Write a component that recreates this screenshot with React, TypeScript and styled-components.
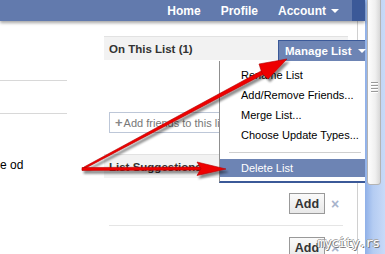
import React from 'react';
import styled, { createGlobalStyle } from 'styled-components';

const GlobalStyle = createGlobalStyle`
  html, body {
    margin: 0;
    padding: 0;
    overflow: hidden;
    background: #fff;
  }
  body {
    font-family: 'Liberation Sans', Arial, sans-serif;
  }
`;

const menuItems = ['Rename List', 'Add/Remove Friends...', 'Merge List...', 'Choose Update Types...'];

export default function App() {
  return (
    <>
      <GlobalStyle />
      <Page>
        <Main>
          <TopBar>
            <Nav>
              <NavLink>Home</NavLink>
              <NavLink>Profile</NavLink>
              <NavLink>
                Account <Caret />
              </NavLink>
            </Nav>
            <DarkEdge />
          </TopBar>
          <Body>
            <LeftCol>
              <Rule $top={60} />
              <Rule $top={33} />
              <Snippet>e od</Snippet>
            </LeftCol>
            <CenterCol>
              <SectionHead>On This List (1)</SectionHead>
              <FriendArea />
              <AddInput>
                <Plus>+</Plus>Add friends to this list
              </AddInput>
              <SectionHead $spaced>List Suggestions</SectionHead>
              <SuggestList>
                <SuggestRow>
                  <AddBtn>Add</AddBtn>
                  <Dismiss>×</Dismiss>
                </SuggestRow>
                <SuggestRow>
                  <AddBtn>Add</AddBtn>
                  <Dismiss>×</Dismiss>
                </SuggestRow>
              </SuggestList>
            </CenterCol>
            <RightRail />
            <MenuWrap>
              <ManageBtn>
                Manage List <Caret />
              </ManageBtn>
              <Dropdown>
                {menuItems.map((item) => (
                  <MenuItem key={item}>{item}</MenuItem>
                ))}
                <Separator />
                <MenuItem $active>Delete List</MenuItem>
              </Dropdown>
            </MenuWrap>
          </Body>
        </Main>
        <Scrollbar>
          <Thumb>
            <Grip />
            <Grip />
            <Grip />
            <Grip />
          </Thumb>
        </Scrollbar>
        <Arrows viewBox="0 0 385 254" width="385" height="254">
          <defs>
            <filter id="shadow" x="-10%" y="-10%" width="120%" height="130%">
              <feDropShadow dx="2" dy="3" stdDeviation="1.2" floodColor="#000" floodOpacity="0.45" />
            </filter>
          </defs>
          <g filter="url(#shadow)" fill="#ee0000" stroke="#b00000" strokeWidth="0.6">
            <path d="M82 170 L84 167 L262 70.5 L264 74 Z" />
            <polygon points="287,59 268,79 262,73 259,64" />
            <path d="M82 167.5 L201 167 L201 170 L82 170.5 Z" />
            <polygon points="226,169 197,162 201,168.5 197,175.5" />
          </g>
        </Arrows>
        <Watermark>mycity.rs</Watermark>
      </Page>
    </>
  );
}

const Page = styled.div`
  position: relative;
  display: flex;
  width: 385px;
  height: 254px;
  overflow: hidden;
`;

const Main = styled.div`
  display: flex;
  flex-direction: column;
  width: 365px;
  min-height: 0;
`;

const TopBar = styled.div`
  display: flex;
  flex-shrink: 0;
  height: 21px;
  position: relative;
  z-index: 1;
  box-shadow: 0 2px 3px rgba(0, 0, 0, 0.35);
`;

const Nav = styled.div`
  flex: 1;
  display: flex;
  justify-content: flex-end;
  align-items: center;
  gap: 20px;
  padding-right: 13px;
  background: #627aad;
`;

const NavLink = styled.span`
  display: flex;
  align-items: center;
  gap: 5px;
  color: #fff;
  font-weight: bold;
  font-size: 12px;
  line-height: 1;
`;

const Caret = styled.span`
  display: inline-block;
  width: 0;
  height: 0;
  border-left: 4px solid transparent;
  border-right: 4px solid transparent;
  border-top: 4px solid #fff;
`;

const DarkEdge = styled.div`
  width: 13px;
  background: #3b5998;
`;

const Body = styled.div`
  position: relative;
  flex: 1;
  min-height: 0;
  display: flex;
`;

const LeftCol = styled.div`
  width: 67px;
  display: flex;
  flex-direction: column;
`;

const Rule = styled.div<{ $top: number }>`
  margin-top: ${(p) => p.$top - 1}px;
  border-top: 1px solid #d8d8d8;
`;

const Snippet = styled.div`
  margin-top: 44px;
  font-size: 12px;
  color: #000;
`;

const CenterCol = styled.div`
  margin-left: 37px;
  width: 244px;
  padding-top: 15px;
  display: flex;
  flex-direction: column;
`;

const SectionHead = styled.div<{ $spaced?: boolean }>`
  flex-shrink: 0;
  height: 23px;
  margin-top: ${(p) => (p.$spaced ? 21 : 0)}px;
  border-top: 1px solid #e2e2e2;
  background: #f2f2f2;
  padding-left: 5px;
  display: flex;
  align-items: center;
  font-size: 11.5px;
  font-weight: bold;
  color: #333;
`;

const FriendArea = styled.div`
  flex-shrink: 0;
  height: 52px;
`;

const AddInput = styled.div`
  flex-shrink: 0;
  height: 19px;
  margin-left: 5px;
  width: 200px;
  border: 1px solid #bdc7d8;
  display: flex;
  align-items: center;
  padding-left: 5px;
  font-size: 11px;
  color: #777;
  white-space: nowrap;
  overflow: hidden;
`;

const Plus = styled.span`
  font-weight: bold;
  font-size: 13px;
  margin-right: 1px;
  color: #888;
`;

const SuggestList = styled.div`
  flex-shrink: 0;
  padding-top: 4px;
  display: flex;
  flex-direction: column;
`;

const SuggestRow = styled.div`
  display: flex;
  justify-content: flex-end;
  align-items: center;
  gap: 6px;
  margin: 0 5px;
  padding: 11px 2px 11px 0;
  border-bottom: 1px solid #e5e5e5;
`;

const AddBtn = styled.div`
  width: 34px;
  height: 19px;
  border: 1px solid #999;
  background: linear-gradient(#fafafa, #e8e8e8);
  display: flex;
  align-items: center;
  justify-content: center;
  font-size: 12.5px;
  font-weight: bold;
  color: #333;
`;

const Dismiss = styled.span`
  font-size: 14px;
  font-weight: bold;
  color: #a8b4cc;
  width: 10px;
`;

const RightRail = styled.div`
  margin-left: 9px;
  width: 7px;
  border-left: 1px solid #d0d0d0;
`;

const MenuWrap = styled.div`
  position: absolute;
  left: 278px;
  top: 19px;
  z-index: 2;
`;

const ManageBtn = styled.div`
  box-sizing: border-box;
  width: 87px;
  height: 21px;
  padding-left: 6px;
  background: #6d84b4;
  border-left: 1px solid #3b5998;
  border-top: 1px solid #3b5998;
  display: flex;
  align-items: center;
  gap: 7px;
  color: #fff;
  font-size: 11.5px;
  font-weight: bold;
  white-space: nowrap;
`;

const Dropdown = styled.div`
  position: absolute;
  left: -59px;
  top: 21px;
  width: 145px;
  background: #fff;
  border-left: 1px solid #8f8f8f;
  border-bottom: 2px solid #3b5998;
  padding: 4px 0 4px;
  display: flex;
  flex-direction: column;
`;

const MenuItem = styled.div<{ $active?: boolean }>`
  height: ${(p) => (p.$active ? 18 : 20)}px;
  padding-left: 21px;
  display: flex;
  align-items: center;
  font-size: 11px;
  color: ${(p) => (p.$active ? '#fff' : '#000')};
  background: ${(p) => (p.$active ? '#6d84b4' : 'transparent')};
  white-space: nowrap;
`;

const Separator = styled.div`
  margin: 7px 4px 6px 9px;
  border-top: 1px solid #cfcfcf;
`;

const Scrollbar = styled.div`
  width: 20px;
  background: linear-gradient(90deg, #8fb0e8, #b4ccf2 40%, #c8daf8);
  display: flex;
  flex-direction: column;
  align-items: flex-start;
  padding-left: 2px;
`;

const Thumb = styled.div`
  box-sizing: border-box;
  width: 14px;
  height: 190px;
  margin-top: -5px;
  border: 1px solid #b4b4b4;
  border-radius: 3px;
  background: linear-gradient(90deg, #fdfdfd, #f0f0f0 60%, #d8d8d8);
  display: flex;
  flex-direction: column;
  align-items: center;
  justify-content: center;
  gap: 1px;
`;

const Grip = styled.div`
  width: 7px;
  height: 1px;
  background: #9a9a9a;
  border-bottom: 1px solid #fff;
  position: relative;
  top: -3px;
`;

const Arrows = styled.svg`
  position: absolute;
  left: 0;
  top: 0;
  pointer-events: none;
  z-index: 5;
`;

const Watermark = styled.div`
  position: absolute;
  right: 6px;
  bottom: 4px;
  z-index: 6;
  font-family: 'DejaVu Sans Mono', monospace;
  font-size: 13px;
  letter-spacing: -1px;
  color: #fff;
  text-shadow: 1px 1px 0 #777, -1px 0 0 #999, 0 -1px 0 #aaa;
`;
